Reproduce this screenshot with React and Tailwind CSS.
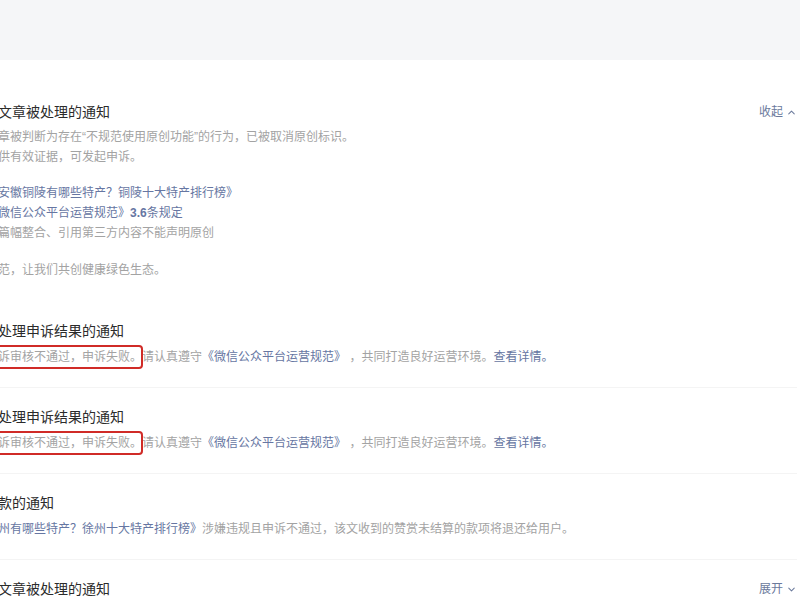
import { ChevronUp, ChevronDown } from 'lucide-react'

const font = 'font-["Liberation_Sans","Noto_Sans_CJK_SC",sans-serif]'

function Link({ children }) {
  return <span className="text-[#6676a2]">{children}</span>
}

function Marked({ children }) {
  return (
    <span className="relative">
      {children}
      <span className="absolute -left-2 right-[-1px] -top-[5px] -bottom-[5px] border-2 border-[#d02b27] rounded-[4px]" />
    </span>
  )
}

function Toggle({ open }) {
  return (
    <span className="flex items-center gap-[3px] text-[12px] text-[#6b7a9c]">
      {open ? '收起' : '展开'}
      {open ? <ChevronUp size={11} strokeWidth={2.2} /> : <ChevronDown size={11} strokeWidth={2.2} />}
    </span>
  )
}

function Notice({ title, children, toggle, last }) {
  return (
    <div className={`pt-[18px] pb-[20px] ${last ? '' : 'border-b border-[#f4f4f4]'}`}>
      <div className="flex justify-between items-center h-[22px]">
        <span className="text-[14px] text-[#2b2b2b]">{title}</span>
        {toggle}
      </div>
      {children && <p className="mt-[5px] text-[12px] leading-[20px] text-[#a3a3a3] whitespace-nowrap">{children}</p>}
    </div>
  )
}

export default function App() {
  return (
    <div className={`w-[800px] h-[600px] overflow-hidden bg-white ${font}`}>
      <div className="h-[60px] bg-[#f5f6f8]" />

      <div className="-ml-[2px] pr-[3px]">
        {/* 展开的通知 */}
        <div className="pt-[41px] pb-[22px]">
          <div className="flex justify-between items-center h-[22px]">
            <span className="text-[14px] text-[#2b2b2b]">文章被处理的通知</span>
            <Toggle open />
          </div>
          <div className="mt-[4px] text-[12px] leading-[20px] text-[#a3a3a3] whitespace-nowrap">
            <p>章被判断为存在“不规范使用原创功能”的行为，已被取消原创标识。</p>
            <p>供有效证据，可发起申诉。</p>
            <p className="mt-[16px]"><Link>安徽铜陵有哪些特产？铜陵十大特产排行榜》</Link></p>
            <p><Link>微信公众平台运营规范》<b className="font-bold">3.6</b>条规定</Link></p>
            <p>篇幅整合、引用第三方内容不能声明原创</p>
            <p className="mt-[17px]">范，让我们共创健康绿色生态。</p>
          </div>
        </div>

        <Notice title="处理申诉结果的通知">
          <Marked>诉审核不通过，申诉失败。</Marked>请认真遵守<Link>《微信公众平台运营规范》</Link> ，共同打造良好运营环境。<Link>查看详情。</Link>
        </Notice>

        <Notice title="处理申诉结果的通知">
          <Marked>诉审核不通过，申诉失败。</Marked>请认真遵守<Link>《微信公众平台运营规范》</Link> ，共同打造良好运营环境。<Link>查看详情。</Link>
        </Notice>

        <Notice title="款的通知">
          <Link>州有哪些特产？徐州十大特产排行榜》</Link>涉嫌违规且申诉不通过，该文收到的赞赏未结算的款项将退还给用户。
        </Notice>

        <Notice title="文章被处理的通知" toggle={<Toggle />} last />
      </div>
    </div>
  )
}
